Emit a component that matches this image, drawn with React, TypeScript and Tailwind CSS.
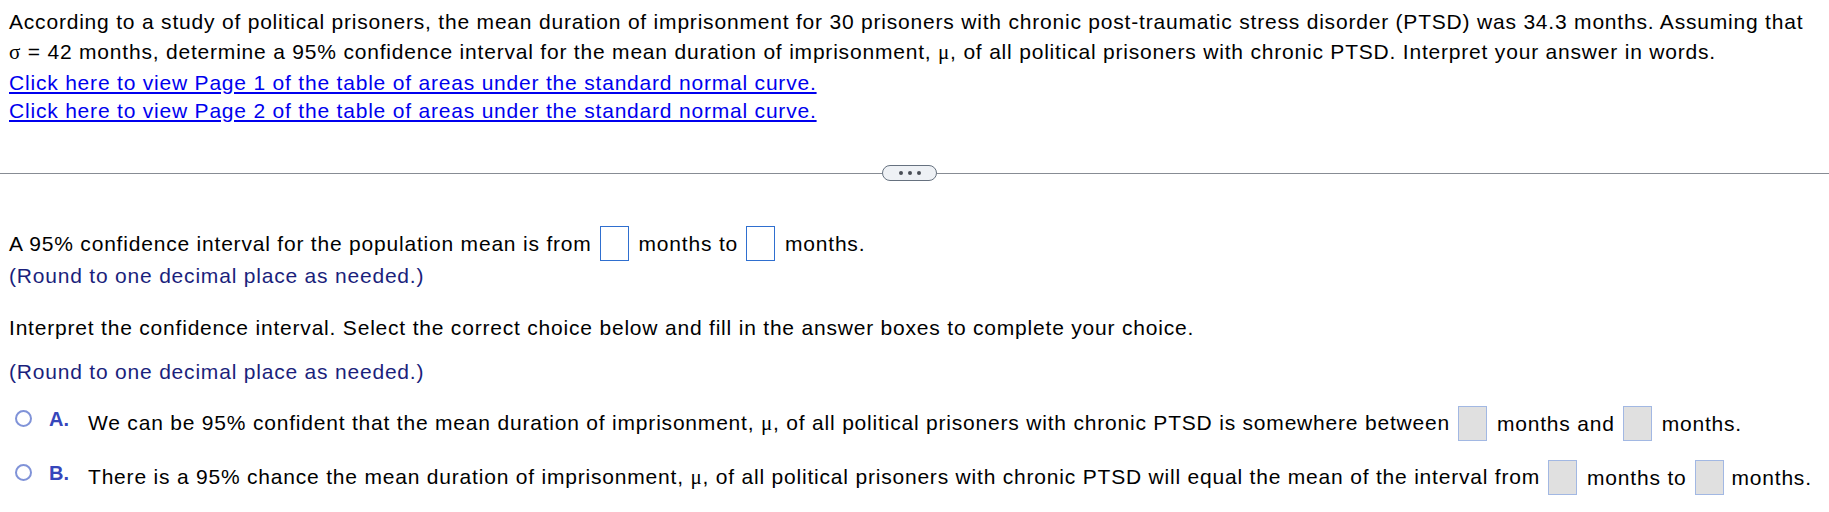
import React from 'react';

const Box: React.FC<{ filled?: boolean }> = ({ filled }) => (
  <span
    className={
      filled
        ? 'inline-block w-[29px] h-[35px] border border-[#a2b8e3] bg-[#e0e0e0] shrink-0'
        : 'inline-block w-[29px] h-[35px] border-[1.5px] border-[#2f6fcf] bg-white shrink-0'
    }
  />
);

const Greek: React.FC<{ children: React.ReactNode }> = ({ children }) => (
  <span className="font-['Liberation_Serif',serif]">{children}</span>
);

const Option: React.FC<{ letter: string; children: React.ReactNode }> = ({ letter, children }) => (
  <div className="flex items-center h-[35px] whitespace-nowrap">
    <div className="flex items-center w-[88px] shrink-0 mb-[10px]">
      <span className="ml-[15px] w-[17px] h-[17px] rounded-full border-2 border-[#8093d8] bg-white" />
      <span className="ml-[17px] font-bold text-[20px] tracking-normal text-[#3646bb]">{letter}.</span>
    </div>
    {children}
  </div>
);

export default function App() {
  return (
    <div className="w-[1829px] h-[512px] overflow-hidden bg-white text-black text-[21px] tracking-[0.8px] font-['Liberation_Sans',Arial,sans-serif]">
      {/* question text */}
      <div className="px-[9px] pt-[7px]">
        <p className="leading-[30px] whitespace-nowrap">
          According to a study of political prisoners, the mean duration of imprisonment for 30 prisoners with chronic post-traumatic stress disorder (PTSD) was 34.3 months. Assuming that
          <br />
          <Greek>σ</Greek> = 42 months, determine a 95% confidence interval for the mean duration of imprisonment, <Greek>μ</Greek>, of all political prisoners with chronic PTSD. Interpret your answer in words.
        </p>
        <a href="#" className="block w-fit mt-[2px] leading-[28px] text-[#0000ee] underline underline-offset-[2px]">
          Click here to view Page 1 of the table of areas under the standard normal curve.
        </a>
        <a href="#" className="block w-fit leading-[27px] text-[#0000ee] underline underline-offset-[2px]">
          Click here to view Page 2 of the table of areas under the standard normal curve.
        </a>
      </div>

      {/* divider */}
      <div className="flex items-center mt-[41px] h-[16px]">
        <div className="w-[882px] h-px bg-[#878c94]" />
        <button className="w-[55px] h-[16px] rounded-full border border-[#66717f] bg-[#eef1f5] flex items-center justify-center gap-[5px]">
          <span className="w-[4px] h-[4px] rounded-full bg-[#4a4f57]" />
          <span className="w-[4px] h-[4px] rounded-full bg-[#4a4f57]" />
          <span className="w-[4px] h-[4px] rounded-full bg-[#4a4f57]" />
        </button>
        <div className="flex-1 h-px bg-[#878c94]" />
      </div>

      {/* answer area */}
      <div className="px-[9px]">
        <div className="flex items-center h-[35px] mt-[45px] whitespace-nowrap">
          <span>A 95% confidence interval for the population mean is from</span>
          <span className="ml-[8px] mr-[10px] flex"><Box /></span>
          <span>months to</span>
          <span className="ml-[8px] mr-[10px] flex"><Box /></span>
          <span>months.</span>
        </div>
        <p className="leading-[30px] text-[#1b1f7c]">(Round to one decimal place as needed.)</p>

        <p className="leading-[30px] mt-[22px]">
          Interpret the confidence interval. Select the correct choice below and fill in the answer boxes to complete your choice.
        </p>
        <p className="leading-[30px] mt-[14px] text-[#1b1f7c]">(Round to one decimal place as needed.)</p>
      </div>

      <div className="mt-[19px] flex flex-col gap-[19px]">
        <Option letter="A">
          <span>
            We can be 95% confident that the mean duration of imprisonment, <Greek>μ</Greek>, of all political prisoners with chronic PTSD is somewhere between
          </span>
          <span className="ml-[8px] mr-[10px] flex"><Box filled /></span>
          <span>months and</span>
          <span className="ml-[8px] mr-[10px] flex"><Box filled /></span>
          <span>months.</span>
        </Option>
        <Option letter="B">
          <span>
            There is a 95% chance the mean duration of imprisonment, <Greek>μ</Greek>, of all political prisoners with chronic PTSD will equal the mean of the interval from
          </span>
          <span className="ml-[8px] mr-[10px] flex"><Box filled /></span>
          <span>months to</span>
          <span className="ml-[8px] mr-[8px] flex"><Box filled /></span>
          <span>months.</span>
        </Option>
      </div>
    </div>
  );
}
